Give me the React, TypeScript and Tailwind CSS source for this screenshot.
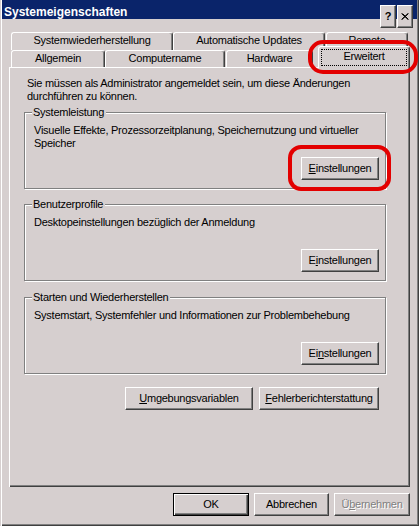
import React from 'react'

const btn =
  'flex items-center justify-center h-[23px] bg-[#d6cfcf] border border-t-white border-l-white border-r-[#404040] border-b-[#404040] shadow-[inset_-1px_-1px_#808080] whitespace-nowrap'

const tab =
  'flex justify-center pt-[1px] bg-[#d6cfcf] border-t border-l border-r border-t-white border-l-white border-r-[#404040] shadow-[inset_-1px_0_#808080] rounded-t-[3px] whitespace-nowrap'

function Group({ title, children, mnemonicBtn }: { title: string; children: React.ReactNode; mnemonicBtn: React.ReactNode }) {
  return (
    <div className="relative h-[77px] w-[362px] border border-[#808080] shadow-[inset_1px_1px_#fff,1px_1px_#fff] flex flex-col pt-[11px] pl-[9px] pr-[6px] pb-[8px]">
      <span className="absolute left-[7px] top-[-7px] pl-[1px] pr-[2px] bg-[#d6cfcf] whitespace-nowrap">{title}</span>
      <p className="whitespace-nowrap">{children}</p>
      <button className={`${btn} w-[78px] self-end mt-auto`}>{mnemonicBtn}</button>
    </div>
  )
}

export default function App() {
  return (
    <div className="relative w-[419px] h-[526px] overflow-hidden bg-[#d6cfcf] font-['Liberation_Sans',Arial,sans-serif] text-[11px] leading-[13px] tracking-[-0.25px] text-black shadow-[inset_1px_0_#d6cfcf,inset_2px_0_#fff,inset_-1px_-1px_#404040,inset_-2px_-2px_#808080]">
      {/* title bar */}
      <div className="mx-[2px] h-[19px] bg-[#0a246a] flex items-start pl-[2px] pr-[4px]">
        <span className="pt-[5px] text-[12px] leading-[14px] tracking-normal font-bold text-white">Systemeigenschaften</span>
        <div className="ml-auto mt-[5px] flex gap-[1px]">
          <div className={`${btn} w-[16px] h-[14px] text-[11px] font-bold leading-none tracking-normal`}>?</div>
          <div className={`${btn} w-[16px] h-[14px]`}>
            <svg width="8" height="7" viewBox="0 0 8 7">
              <path d="M0.5 0.5 L7 6.5 M1.5 0.5 L7.5 6.5 M7 0.5 L0.5 6.5 M7.5 0.5 L1 6.5" stroke="#000" strokeWidth="1" />
            </svg>
          </div>
        </div>
      </div>

      {/* tabs */}
      <div className="mt-[13px] flex h-[18px] pl-[11px]">
        <div className={`${tab} w-[162px] h-[18px]`}>Systemwiederherstellung</div>
        <div className={`${tab} w-[152px] h-[18px]`}>Automatische Updates</div>
        <div className={`${tab} ml-[1px] w-[82px] h-[18px]`}>Remote</div>
      </div>
      <div className="flex items-end h-[17px] pl-[11px]">
        <div className={`${tab} w-[94px] h-[17px]`}>Allgemein</div>
        <div className={`${tab} w-[120px] h-[17px]`}>Computername</div>
        <div className={`${tab} ml-[1px] w-[87px] h-[17px]`}>Hardware</div>
        <div className={`${tab} relative z-10 ml-[5px] w-[92px] h-[22px] mb-[-1px] !pt-[3px]`}>
          Erweitert
          <span className="absolute left-[2px] right-[2px] top-[2px] bottom-[2px] border border-dotted border-black" />
        </div>
      </div>

      {/* panel */}
      <div className="ml-[9px] w-[401px] h-[420px] flex flex-col pt-[10px] pl-[15px] shadow-[inset_1px_1px_#fff,inset_-1px_-1px_#404040,inset_-2px_-2px_#808080]">
        <p className="ml-[3px] whitespace-nowrap">
          Sie müssen als Administrator angemeldet sein, um diese Änderungen
          <br />
          durchführen zu können.
        </p>

        <div className="mt-[9px]">
          <Group
            title="Systemleistung"
            mnemonicBtn={<><span className="underline">E</span>instellungen</>}
          >
            Visuelle Effekte, Prozessorzeitplanung, Speichernutzung und virtueller
            <br />
            Speicher
          </Group>
        </div>

        <div className="mt-[15px]">
          <Group
            title="Benutzerprofile"
            mnemonicBtn={<>E<span className="underline">i</span>nstellungen</>}
          >
            Desktopeinstellungen bezüglich der Anmeldung
          </Group>
        </div>

        <div className="mt-[16px]">
          <Group
            title="Starten und Wiederherstellen"
            mnemonicBtn={<>Ei<span className="underline">n</span>stellungen</>}
          >
            Systemstart, Systemfehler und Informationen zur Problembehebung
          </Group>
        </div>

        <div className="mt-[13px] w-[362px] flex justify-end gap-[6px] pr-[7px]">
          <button className={`${btn} w-[128px]`}>
            <span className="underline">U</span>mgebungsvariablen
          </button>
          <button className={`${btn} w-[120px]`}>
            <span className="underline">F</span>ehlerberichterstattung
          </button>
        </div>
      </div>

      {/* dialog buttons */}
      <div className="mt-[6px] flex justify-end gap-[5px] pr-[9px]">
        <button className="flex items-center justify-center w-[76px] h-[23px] bg-[#d6cfcf] border border-black shadow-[inset_1px_1px_#fff,inset_-1px_-1px_#404040,inset_-2px_-2px_#808080]">
          OK
        </button>
        <button className={`${btn} w-[75px]`}>Abbrechen</button>
        <button className={`${btn} w-[76px] text-[#808080] [text-shadow:1px_1px_#fff]`}>
          Ü<span className="underline">b</span>ernehmen
        </button>
      </div>

      {/* red annotation marks */}
      <div className="absolute left-[308px] top-[40px] w-[110px] h-[34px] rounded-[15px] border-[4px] border-[#e30000] z-20" />
      <div className="absolute left-[288px] top-[145px] w-[103px] h-[46px] rounded-[13px] border-[4px] border-[#e30000] z-20" />
    </div>
  )
}
